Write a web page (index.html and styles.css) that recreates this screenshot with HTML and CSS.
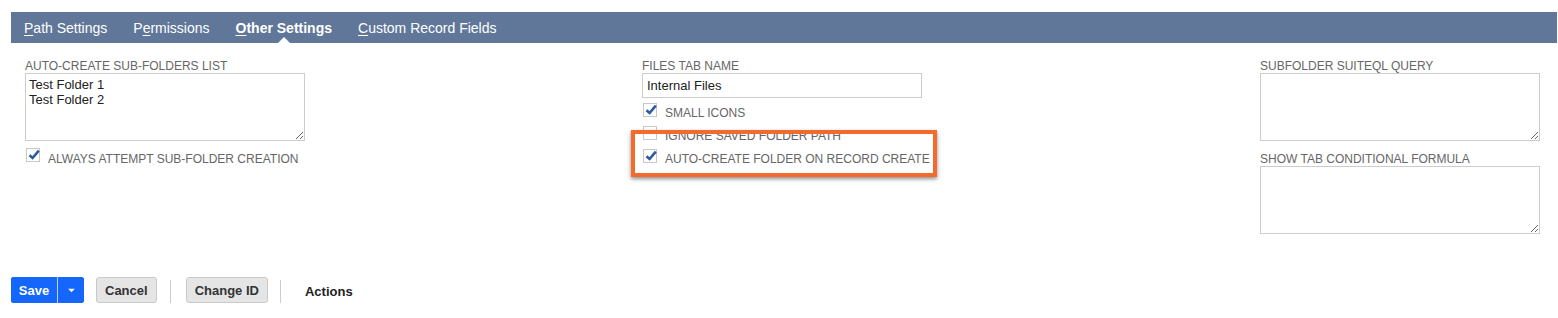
FILE: index.html
```html
<!DOCTYPE html>
<html lang="en">
<head>
    <meta charset="UTF-8">
    <title>Other Settings</title>
    <link rel="stylesheet" href="styles.css">
</head>
<body>
    <nav class="tabs">
        <a class="tab"><u>P</u>ath Settings</a>
        <a class="tab">P<u>e</u>rmissions</a>
        <a class="tab active"><u>O</u>ther Settings</a>
        <a class="tab"><u>C</u>ustom Record Fields</a>
    </nav>

    <div class="form">
        <div class="col left">
            <label class="field-label">AUTO-CREATE SUB-FOLDERS LIST</label>
            <textarea class="area">Test Folder 1
Test Folder 2</textarea>
            <div class="check-row">
                <span class="box checked"><svg viewBox="0 0 14 14"><path d="M2.5 7.2 L5.6 10 L11.8 2.6"/></svg></span>
                <span class="check-text">ALWAYS ATTEMPT SUB-FOLDER CREATION</span>
            </div>
        </div>

        <div class="col mid">
            <label class="field-label">FILES TAB NAME</label>
            <input class="text-input" type="text" value="Internal Files">
            <div class="check-row">
                <span class="box checked"><svg viewBox="0 0 14 14"><path d="M2.5 7.2 L5.6 10 L11.8 2.6"/></svg></span>
                <span class="check-text">SMALL ICONS</span>
            </div>
            <div class="check-row">
                <span class="box"></span>
                <span class="check-text">IGNORE SAVED FOLDER PATH</span>
            </div>
            <div class="check-row last">
                <span class="box checked"><svg viewBox="0 0 14 14"><path d="M2.5 7.2 L5.6 10 L11.8 2.6"/></svg></span>
                <span class="check-text">AUTO-CREATE FOLDER ON RECORD CREATE</span>
            </div>
            <div class="highlight"></div>
        </div>

        <div class="col">
            <label class="field-label">SUBFOLDER SUITEQL QUERY</label>
            <textarea class="area"></textarea>
            <label class="field-label second">SHOW TAB CONDITIONAL FORMULA</label>
            <textarea class="area"></textarea>
        </div>
    </div>

    <div class="footer">
        <div class="save-group">
            <button class="btn-save">Save</button>
            <button class="btn-drop"><svg viewBox="0 0 10 6"><path d="M1 1 L5 5 L9 1 Z"/></svg></button>
        </div>
        <button class="btn">Cancel</button>
        <span class="sep"></span>
        <button class="btn">Change ID</button>
        <span class="sep"></span>
        <span class="actions">Actions</span>
    </div>
</body>
</html>
```

FILE: styles.css
```css
* {
    margin: 0;
    padding: 0;
    box-sizing: border-box;
}

body {
    font-family: 'Liberation Sans', Arial, sans-serif;
    background: #fff;
    color: #222;
}

.tabs {
    margin: 12px 1px 0 11px;
    height: 31px;
    background: #607799;
    display: flex;
    gap: 26px;
    padding-left: 13px;
}

.tab {
    position: relative;
    color: #fff;
    font-size: 14px;
    line-height: 31px;
    padding-top: 1px;
    text-decoration: none;
}

.tab u {
    text-decoration: underline;
    text-underline-offset: 2px;
}

.tab.active {
    font-weight: bold;
}

.tab.active::after {
    content: '';
    position: absolute;
    left: 50%;
    bottom: 0;
    margin-left: -6px;
    border-left: 6px solid transparent;
    border-right: 6px solid transparent;
    border-bottom: 6px solid #fff;
}

.form {
    display: grid;
    grid-template-columns: 617px 618px 1fr;
    padding: 16px 0 0 25px;
}

.col {
    display: flex;
    flex-direction: column;
    align-items: flex-start;
}

.mid {
    position: relative;
}

.field-label {
    font-size: 12px;
    line-height: 14px;
    color: #666;
}

.field-label.second {
    margin-top: 11px;
}

.area {
    width: 280px;
    height: 68px;
    border: 1px solid #ccc;
    padding: 3px 3px;
    font-family: 'Liberation Sans', Arial, sans-serif;
    font-size: 13px;
    line-height: 15px;
    color: #222;
    resize: vertical;
}

.text-input {
    width: 280px;
    height: 25px;
    border: 1px solid #ccc;
    padding: 0 4px;
    font-family: 'Liberation Sans', Arial, sans-serif;
    font-size: 13px;
    color: #222;
}

.check-row {
    display: flex;
    align-items: flex-end;
    gap: 8px;
    margin-top: 6px;
    margin-left: 1px;
}

.left .check-row {
    margin-top: 7px;
}

.left .check-text {
    margin-bottom: -4px;
}

.mid .check-row {
    margin-top: 5px;
}

.mid .check-row + .check-row {
    margin-top: 9px;
}

.mid .check-row.last {
    margin-top: 9px;
}

.box {
    width: 14px;
    height: 14px;
    border: 1px solid #c8c8c8;
    background: #fff;
    position: relative;
}

.box svg {
    position: absolute;
    left: 0;
    top: -1px;
    width: 14px;
    height: 14px;
    fill: none;
    stroke: #2b5aa3;
    stroke-width: 2.6;
}

.check-text {
    font-size: 12px;
    line-height: 14px;
    color: #666;
    margin-bottom: -3px;
}

.highlight {
    position: absolute;
    left: -11px;
    top: 71px;
    width: 306px;
    height: 47px;
    border: 4px solid #f26b2c;
    box-shadow: 0 2px 4px rgba(0, 0, 0, 0.45);
}

.footer {
    display: flex;
    align-items: center;
    margin-top: 43px;
    padding-left: 11px;
    height: 26px;
}

.save-group {
    display: flex;
    height: 26px;
    border-radius: 3px;
    overflow: hidden;
    background: #1467fa;
    margin-right: 12px;
}

.btn-save {
    width: 47px;
    border: none;
    border-right: 1px solid #b9d3ff;
    background: #1467fa;
    color: #fff;
    font-family: 'Liberation Sans', Arial, sans-serif;
    font-size: 13px;
    font-weight: bold;
}

.btn-drop {
    width: 26px;
    border: none;
    background: #1467fa;
    display: flex;
    align-items: center;
    justify-content: center;
}

.btn-drop svg {
    width: 9px;
    height: 5px;
    fill: #fff;
}

.btn {
    height: 26px;
    padding: 0 8px;
    border: 1px solid #c9c9c9;
    border-radius: 3px;
    background: #e5e5e5;
    color: #333;
    font-family: 'Liberation Sans', Arial, sans-serif;
    font-size: 13px;
    font-weight: bold;
}

.sep {
    width: 1px;
    height: 23px;
    background: #ccc;
    margin: 3px 15px 0 13px;
}

.sep + .btn + .sep {
    margin-left: 12px;
}

.actions {
    font-size: 13px;
    font-weight: bold;
    color: #222;
    margin-left: 9px;
    padding-top: 3px;
}
```
